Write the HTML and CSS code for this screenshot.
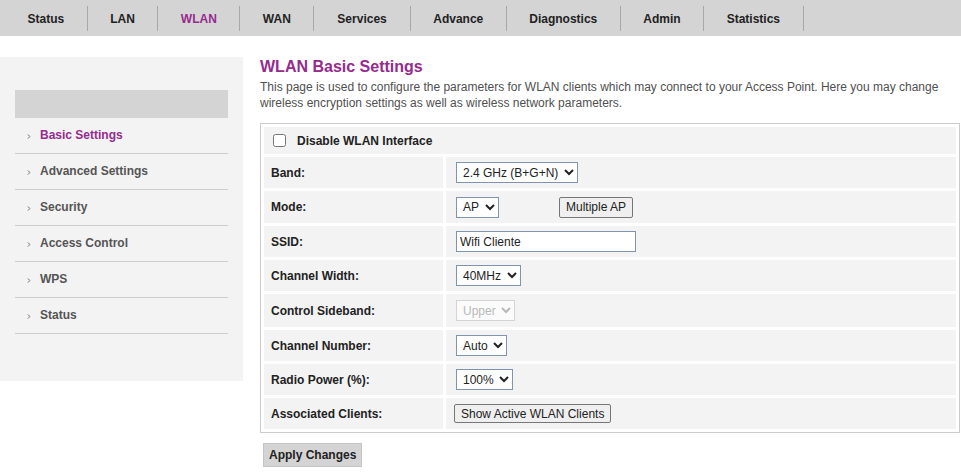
FILE: index.html
```html
<!DOCTYPE html>
<html lang="en">
<head>
<meta charset="utf-8">
<title>WLAN Basic Settings</title>
<link rel="stylesheet" href="styles.css">
</head>
<body>
<nav class="topnav">
  <ul class="tabs">
    <li class="tab">Status</li>
    <li class="tab">LAN</li>
    <li class="tab active">WLAN</li>
    <li class="tab">WAN</li>
    <li class="tab wide">Services</li>
    <li class="tab">Advance</li>
    <li class="tab">Diagnostics</li>
    <li class="tab">Admin</li>
    <li class="tab">Statistics</li>
  </ul>
</nav>
<div class="page">
  <aside class="sidebar">
    <div class="side-head"></div>
    <ul class="side-menu">
      <li class="side-item active"><svg class="arrow" width="4" height="5" viewBox="0 0 4 5"><path d="M0.6 0.6 L3.2 2.5 L0.6 4.4" fill="none" stroke="#8a8a8a" stroke-width="1"/></svg>Basic Settings</li>
      <li class="side-item"><svg class="arrow" width="4" height="5" viewBox="0 0 4 5"><path d="M0.6 0.6 L3.2 2.5 L0.6 4.4" fill="none" stroke="#8a8a8a" stroke-width="1"/></svg>Advanced Settings</li>
      <li class="side-item"><svg class="arrow" width="4" height="5" viewBox="0 0 4 5"><path d="M0.6 0.6 L3.2 2.5 L0.6 4.4" fill="none" stroke="#8a8a8a" stroke-width="1"/></svg>Security</li>
      <li class="side-item"><svg class="arrow" width="4" height="5" viewBox="0 0 4 5"><path d="M0.6 0.6 L3.2 2.5 L0.6 4.4" fill="none" stroke="#8a8a8a" stroke-width="1"/></svg>Access Control</li>
      <li class="side-item"><svg class="arrow" width="4" height="5" viewBox="0 0 4 5"><path d="M0.6 0.6 L3.2 2.5 L0.6 4.4" fill="none" stroke="#8a8a8a" stroke-width="1"/></svg>WPS</li>
      <li class="side-item"><svg class="arrow" width="4" height="5" viewBox="0 0 4 5"><path d="M0.6 0.6 L3.2 2.5 L0.6 4.4" fill="none" stroke="#8a8a8a" stroke-width="1"/></svg>Status</li>
    </ul>
  </aside>
  <main class="main">
    <h1 class="title">WLAN Basic Settings</h1>
    <p class="intro">This page is used to configure the parameters for WLAN clients which may connect to your Access Point. Here you may change wireless encryption settings as well as wireless network parameters.</p>
    <div class="form-grid">
      <div class="cell full"><input type="checkbox" class="chk"><span class="lbl">Disable WLAN Interface</span></div>
      <div class="cell lbl">Band:</div>
      <div class="cell val"><select class="sel"><option>2.4 GHz (B+G+N)</option></select></div>
      <div class="cell lbl">Mode:</div>
      <div class="cell val"><select class="sel"><option>AP</option></select><button class="btn multi">Multiple AP</button></div>
      <div class="cell lbl">SSID:</div>
      <div class="cell val"><input type="text" class="txt" value="Wifi Cliente"></div>
      <div class="cell lbl">Channel Width:</div>
      <div class="cell val"><select class="sel"><option>40MHz</option></select></div>
      <div class="cell lbl">Control Sideband:</div>
      <div class="cell val"><select class="sel" disabled><option>Upper</option></select></div>
      <div class="cell lbl">Channel Number:</div>
      <div class="cell val"><select class="sel"><option>Auto</option></select></div>
      <div class="cell lbl">Radio Power (%):</div>
      <div class="cell val"><select class="sel"><option>100%</option></select></div>
      <div class="cell lbl">Associated Clients:</div>
      <div class="cell val"><button class="btn small">Show Active WLAN Clients</button></div>
    </div>
    <button class="apply">Apply Changes</button>
  </main>
</div>
</body>
</html>
```
FILE: styles.css
```css
* { box-sizing: border-box; }
body {
  margin: 0;
  font-family: "Liberation Sans", Arial, sans-serif;
  font-size: 12px;
  color: #222;
  background: #fff;
}
.topnav {
  background: #d4d4d4;
  height: 36px;
  display: flex;
  align-items: center;
}
.tabs {
  list-style: none;
  margin: 0;
  padding: 1px 0 0 5px;
  display: flex;
}
.tab {
  height: 25px;
  line-height: 27px;
  padding: 0 22.5px;
  border-right: 1px solid #a8a8a8;
  font-weight: bold;
  font-size: 12px;
  color: #222;
}
.tab.wide { padding: 0 23px; }
.tab.active { color: #962b8f; }

.page {
  display: flex;
  align-items: flex-start;
  margin-top: 21px;
}
.sidebar {
  width: 243px;
  height: 324px;
  flex: none;
  background: #f3f3f3;
  padding: 33px 15px 0 15px;
}
.side-head {
  height: 28px;
  background: #d4d4d4;
}
.side-menu {
  list-style: none;
  margin: 0;
  padding: 0;
}
.side-item {
  height: 36px;
  border-bottom: 1px solid #cdcdcd;
  display: flex;
  align-items: center;
  padding-left: 12px;
  padding-bottom: 1px;
  font-weight: bold;
  color: #555;
}
.side-item .arrow {
  margin-right: 9px;
  margin-top: 3px;
}
.side-item.active { color: #962b8f; }

.main {
  margin-left: 17px;
  width: 700px;
}
.title {
  margin: 1px 0 0 0;
  font-size: 16px;
  line-height: 18px;
  font-weight: bold;
  color: #962b8f;
}
.intro {
  margin: 3px 0 12px 0;
  line-height: 16px;
  color: #505050;
}
.form-grid {
  display: grid;
  grid-template-columns: 179px 1fr;
  grid-template-rows: 27px 31px 32px 31px 31px 33px 31px 31px 31px;
  gap: 3px;
  padding: 3px;
  border: 1px solid #cccccc;
}
.cell {
  background: #f3f3f3;
  display: flex;
  align-items: center;
}
.cell.full { grid-column: 1 / 3; padding-left: 5px; }
.cell.lbl { padding-left: 7px; font-weight: bold; color: #222; }
.cell.val { padding-left: 10px; }
.cell .lbl { font-weight: bold; }
.chk {
  width: 13px;
  height: 13px;
  margin: 0 11px 0 4px;
}
.sel {
  height: 21px;
  font-family: "Liberation Sans", Arial, sans-serif;
  font-size: 12px;
  color: #222;
  background: #fff;
  border: 1px solid #7f95ad;
  border-radius: 0;
  padding: 0 2px;
}
.sel:disabled {
  color: #a0a0a0;
  border-color: #c8c8c8;
}
.txt {
  width: 180px;
  height: 21px;
  font-family: "Liberation Sans", Arial, sans-serif;
  font-size: 12px;
  color: #222;
  border: 1px solid #7f95ad;
  padding: 0 3px;
  background: #fff;
}
.btn {
  font-family: "Liberation Sans", Arial, sans-serif;
  font-size: 12px;
  color: #222;
  background: #efefef;
  border: 1px solid #767676;
  border-radius: 2px;
  padding: 0 6px;
  height: 21px;
}
.btn.multi { margin-left: 60px; }
.btn.small { height: 19px; margin-left: -2px; }
.apply {
  margin: 10px 0 0 3px;
  height: 24px;
  padding: 0 5px;
  font-family: "Liberation Sans", Arial, sans-serif;
  font-size: 12px;
  font-weight: bold;
  color: #222;
  background: #d4d4d4;
  border: 1px solid #c4c4c4;
  border-radius: 0;
}
```
